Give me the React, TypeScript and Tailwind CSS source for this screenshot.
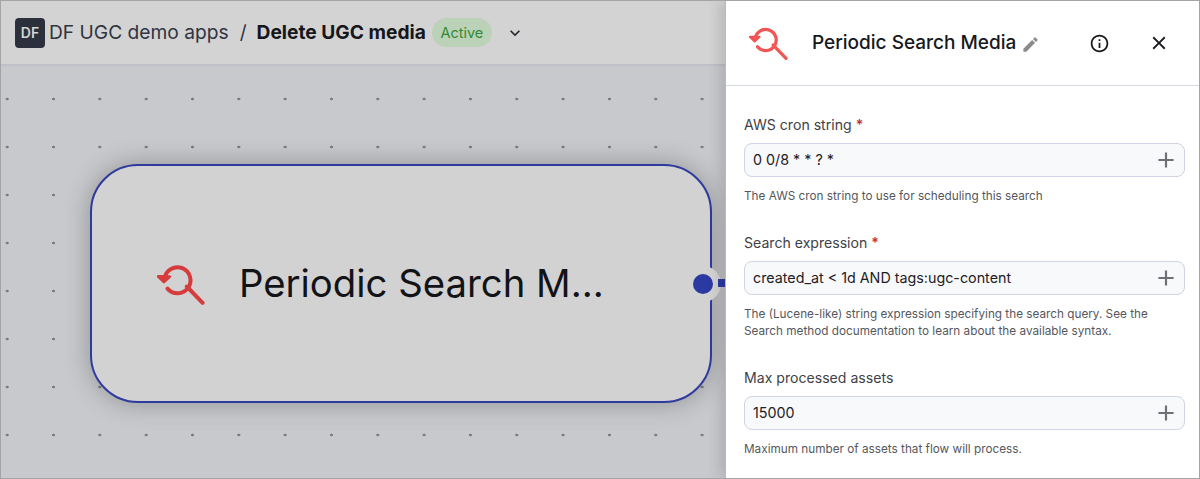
import { MdAdd, MdClose, MdEdit, MdExpandMore, MdInfoOutline } from "react-icons/md"

function SearchIcon({ className }: { className: string }) {
  return (
    <svg viewBox="0 0 48 44" fill="none" stroke="currentColor" strokeWidth="4" strokeLinecap="round" strokeLinejoin="round" className={className}>
      <path d="M7.6 16.5A13 13 0 1 1 10.5 26.6" />
      <path d="M29.8 24.5L45.6 40.8" />
      <path d="M1.2 14.4L7 20L12.8 14.6Z" fill="currentColor" strokeWidth="2.8" />
    </svg>
  )
}

function Field({ label, required, value, help }: { label: string; required?: boolean; value: string; help: string[] }) {
  return (
    <div>
      <div className="text-[14.1px] leading-[20px] text-[#3f4148]">
        {label}
        {required && <span className="ml-1 text-[#c62f35] font-semibold">*</span>}
      </div>
      <div className="mt-[8px] h-[34px] flex items-center justify-between pl-2 pr-[5px] bg-[#f8f9fb] border border-[#cfd3e4] rounded-lg">
        <span className="text-[14.3px] text-[#1f2024]">{value}</span>
        <MdAdd className="w-[26px] h-[26px] text-[#6e7076]" />
      </div>
      <div className="mt-[11px] text-[11.75px] leading-[17px] text-[#55575d]">
        {help.map((line) => (
          <div key={line}>{line}</div>
        ))}
      </div>
    </div>
  )
}

export default function App() {
  return (
    <div className="w-[1200px] h-[479px] flex overflow-hidden border border-[#a4a4a4] font-['Inter',sans-serif]">
      <div className="w-[724px] shrink-0 flex flex-col">
        <header className="h-[65px] shrink-0 flex items-center pl-[14px] bg-[#d3d3d3] border-b-2 border-[#bfc0c8]">
          <div className="w-[30px] h-[30px] flex items-center justify-center rounded bg-[#2b303c] text-[#d5d5d5] text-[14px] font-semibold">
            DF
          </div>
          <span className="ml-[4px] text-[19.2px] text-[#2f3440]">DF UGC demo apps</span>
          <span className="ml-[11px] text-[19.2px] text-[#2f3440]">/</span>
          <span className="ml-[10px] text-[19.2px] font-bold text-[#15161a]">Delete UGC media</span>
          <span className="ml-[6px] h-[29px] w-[60px] flex items-center justify-center rounded-full bg-[#bcd2b8] text-[14.5px] text-[#2f8a32]">
            Active
          </span>
          <MdExpandMore className="ml-[13px] w-[20px] h-[20px] text-[#22252c]" />
        </header>
        <main className="relative flex-1 bg-[#c8c9cc] bg-[radial-gradient(circle,#7d7e82_1.3px,transparent_1.6px)] bg-[size:46.33px_48px] bg-[position:-17px_9px]">
          <div className="absolute left-[89px] top-[98px] w-[622px] h-[239px] flex items-center pl-[65px] rounded-[48px] bg-[#d2d2d2] border-[2.5px] border-[#2f3a9e] shadow-[0_0_26px_rgba(0,0,0,0.28)]">
            <SearchIcon className="w-[48px] h-[44px] text-[#d63c3e]" />
            <span className="ml-[34px] text-[38.3px] text-[#121317] whitespace-nowrap">Periodic Search M...</span>
          </div>
          <div className="absolute left-[684px] top-[200px] w-[36px] h-[36px] rounded-full bg-[#d2d2d2] flex items-center justify-center">
            <div className="w-[20px] h-[20px] rounded-full bg-[#2b39a3]" />
          </div>
          <div className="absolute left-[717px] top-[213px] w-[8px] h-[8px] bg-[#2b39a3]" />
        </main>
      </div>
      <aside className="flex-1 bg-white border-l border-[#b9b9b9] shadow-[-6px_0_12px_rgba(0,0,0,0.12)] z-10">
        <div className="h-[85px] flex items-center pl-[23px] border-b border-[#d6d7e1]">
          <SearchIcon className="w-[39px] h-[36px] text-[#f25555]" />
          <span className="ml-[24px] text-[19px] font-medium text-[#17181c] whitespace-nowrap">Periodic Search Media</span>
          <MdEdit className="ml-[5px] mt-[2px] w-[19px] h-[19px] text-[#8b8b8e]" />
          <MdInfoOutline className="ml-[49px] w-[21px] h-[21px] text-[#17181c]" />
          <MdClose className="ml-[38px] w-[22px] h-[22px] text-[#17181c]" />
        </div>
        <div className="pt-[29px] pl-[18px] pr-[14px] flex flex-col gap-[28px]">
          <Field label="AWS cron string" required value="0 0/8 * * ? *" help={["The AWS cron string to use for scheduling this search"]} />
          <Field
            label="Search expression"
            required
            value="created_at < 1d AND tags:ugc-content"
            help={[
              "The (Lucene-like) string expression specifying the search query. See the",
              "Search method documentation to learn about the available syntax.",
            ]}
          />
          <Field label="Max processed assets" value="15000" help={["Maximum number of assets that flow will process."]} />
        </div>
      </aside>
    </div>
  )
}
